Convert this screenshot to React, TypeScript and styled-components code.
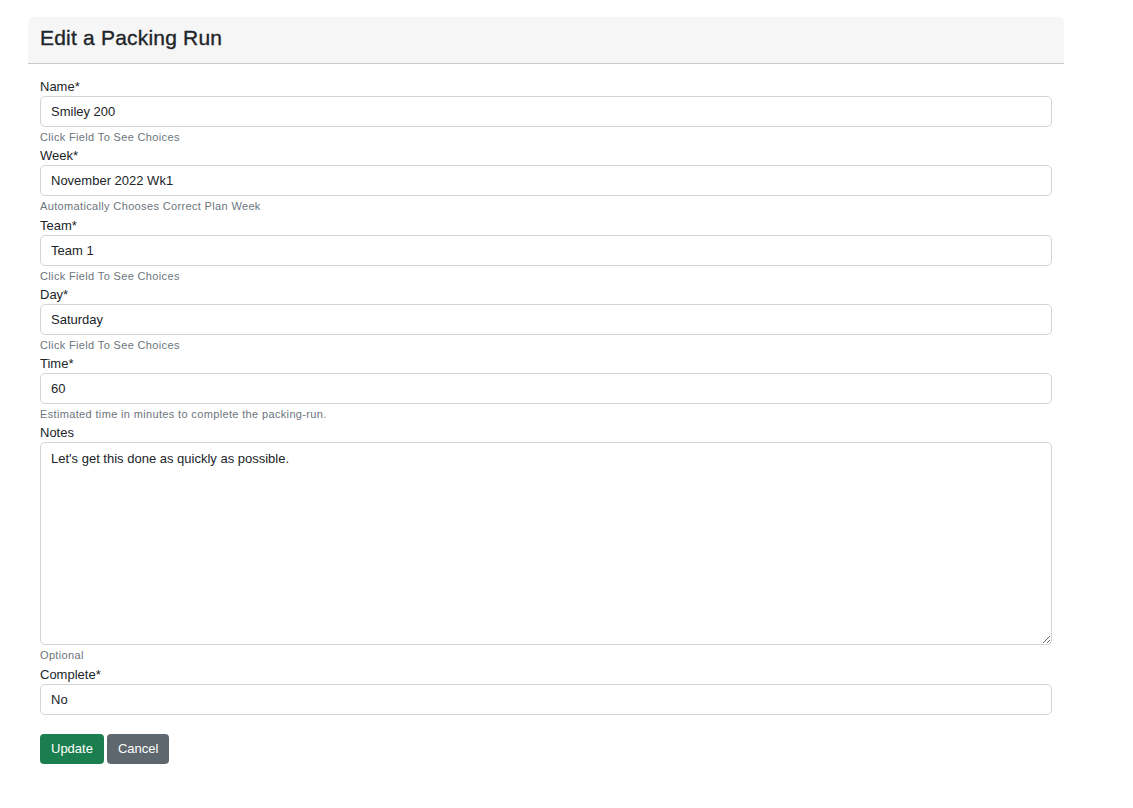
import React from "react";
import styled, { createGlobalStyle } from "styled-components";

const GlobalStyle = createGlobalStyle`
    body {
        margin: 0;
        background: #ffffff;
        font-family: "Liberation Sans", Arial, sans-serif;
        color: #212529;
    }
`;

const Page = styled.div`
    padding: 17px 0 0 28px;
    width: 1036px;
`;

const Header = styled.div`
    display: flex;
    align-items: center;
    box-sizing: border-box;
    height: 47px;
    padding: 0 12px 6px 12px;
    background-color: #f6f6f6;
    border-bottom: 1px solid #c9c9c9;
    border-radius: 6px 6px 0 0;

    h1 {
        margin: 0;
        font-size: 21px;
        line-height: 25px;
        font-weight: 400;
        letter-spacing: 0.2px;
        -webkit-text-stroke: 0.35px #212529;
        color: #212529;
    }
`;

const Body = styled.form`
    display: flex;
    flex-direction: column;
    padding: 13px 12px 0 12px;
`;

const Field = styled.div`
    display: flex;
    flex-direction: column;
`;

const Label = styled.label`
    font-size: 13px;
    line-height: 19px;
    color: #212529;
`;

const Input = styled.input`
    box-sizing: border-box;
    height: 31px;
    padding: 0 10px;
    font-family: inherit;
    font-size: 13px;
    color: #212529;
    background: #fff;
    border: 1px solid #ced4da;
    border-radius: 5px;
    outline: none;
`;

const TextArea = styled.textarea`
    box-sizing: border-box;
    height: 203px;
    padding: 7px 10px;
    font-family: inherit;
    font-size: 13px;
    line-height: 17px;
    color: #212529;
    border: 1px solid #ced4da;
    border-radius: 5px;
    outline: none;
    resize: vertical;
`;

const Help = styled.div`
    margin-top: 2px;
    font-size: 11px;
    line-height: 17.3px;
    letter-spacing: 0.35px;
    color: #6c757d;
`;

const Actions = styled.div`
    display: flex;
    gap: 3px;
    margin-top: 19px;
`;

const Button = styled.button<{ $variant: "success" | "secondary" }>`
    height: 30px;
    padding: 0 11px;
    font-family: inherit;
    font-size: 13px;
    color: #fff;
    border: none;
    border-radius: 4px;
    background-color: ${p => (p.$variant === "success" ? "#1b7e4f" : "#5f676e")};
    cursor: pointer;
`;

interface IField {
    label: string;
    value: string;
    help?: string;
}

const fields: IField[] = [
    { label: "Name*", value: "Smiley 200", help: "Click Field To See Choices" },
    { label: "Week*", value: "November 2022 Wk1", help: "Automatically Chooses Correct Plan Week" },
    { label: "Team*", value: "Team 1", help: "Click Field To See Choices" },
    { label: "Day*", value: "Saturday", help: "Click Field To See Choices" },
    { label: "Time*", value: "60", help: "Estimated time in minutes to complete the packing-run." },
];

const App: React.FC = () => {
    return (
        <Page>
            <GlobalStyle />
            <Header>
                <h1>Edit a Packing Run</h1>
            </Header>
            <Body onSubmit={e => e.preventDefault()}>
                {fields.map(f => (
                    <Field key={f.label}>
                        <Label>{f.label}</Label>
                        <Input defaultValue={f.value} />
                        {f.help ? <Help>{f.help}</Help> : ""}
                    </Field>
                ))}
                <Field>
                    <Label>Notes</Label>
                    <TextArea defaultValue="Let's get this done as quickly as possible." />
                    <Help>Optional</Help>
                </Field>
                <Field>
                    <Label>Complete*</Label>
                    <Input defaultValue="No" />
                </Field>
                <Actions>
                    <Button $variant="success">Update</Button>
                    <Button $variant="secondary" type="button">Cancel</Button>
                </Actions>
            </Body>
        </Page>
    );
};

export default App;
